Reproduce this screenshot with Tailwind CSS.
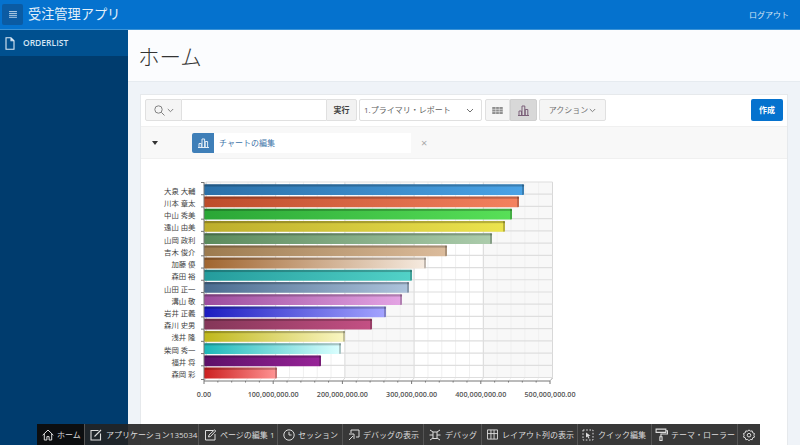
<!DOCTYPE html>
<html lang="ja">
<head>
    <meta charset="UTF-8">
    <title>受注管理アプリ</title>
    <script src="https://cdn.jsdelivr.net/npm/@tailwindcss/browser@4"></script>
</head>
<body class="relative w-[800px] h-[445px] overflow-hidden bg-[#eff3f8] font-['Open_Sans','Noto_Sans_CJK_JP',sans-serif] text-[#404040]">

    <!-- Header -->
    <header class="h-[30px] bg-[#0572ce] border-b border-[#3c93d6] flex items-center justify-between pl-[2px] pr-[11px] text-white">
        <div class="flex items-center">
            <button class="w-[21px] h-[21px] bg-[#0b5ba3] rounded-[2px] flex items-center justify-center">
                <svg width="8" height="7" viewBox="0 0 9 8" fill="#a9c7e2"><rect width="9" height="1.2"/><rect y="2.2" width="9" height="1.2"/><rect y="4.4" width="9" height="1.2"/><rect y="6.6" width="9" height="1.2"/></svg>
            </button>
            <span class="ml-[5px] text-[13.2px] leading-none text-[#e4f0fa]">受注管理アプリ</span>
        </div>
        <span class="text-[8px] text-[#d5e6f5]">ログアウト</span>
    </header>

    <div class="flex h-[415px]">
        <!-- Sidebar -->
        <nav class="w-[128px] shrink-0 bg-[#003c6e]">
            <div class="h-[26px] bg-[#00508f] flex items-center pl-[5px] text-[#d5e6f5]">
                <svg width="10" height="13" viewBox="0 0 10 13" fill="none" stroke="#dbe9f5" stroke-width="1.1"><path d="M1 .8h5l3 3v8.4H1zM6 .8v3h3"/></svg>
                <span class="ml-[8px] text-[8.5px] font-semibold">ORDERLIST</span>
            </div>
        </nav>

        <main class="flex-1 min-w-0">
            <!-- Title -->
            <div class="h-[52px] bg-[#fbfcfe] border-b border-[#e6ebf0] pl-[10px] pt-[2px] flex items-center">
                <h1 class="text-[21.5px] leading-none font-light text-[#333]">ホーム</h1>
            </div>

            <!-- Report card -->
            <section class="mt-[12px] ml-[12px] mr-[12px] h-[351px] bg-white border-t border-l border-r border-[#e6e9ec]">
                <div class="h-[31px] px-[4px] pt-[4px] flex items-start">
                    <div class="w-[37px] h-[22px] bg-[#f5f5f5] border border-[#e0e0e0] rounded-l-[2px] flex items-center justify-center gap-[2px]">
                        <svg width="11" height="11" viewBox="0 0 11 11" fill="none" stroke="#808080" stroke-width="1"><circle cx="4.5" cy="4.5" r="3.7"/><path d="M7.3 7.3l3.2 3.2"/></svg>
                        <svg width="7" height="5" viewBox="0 0 7 5" fill="none" stroke="#808080"><path d="M.8 1l2.7 2.7L6.2 1"/></svg>
                    </div>
                    <div class="w-[144px] h-[22px] bg-white border-y border-[#e0e0e0]"></div>
                    <div class="w-[31px] h-[22px] bg-[#f2f2f2] border border-[#e0e0e0] rounded-r-[2px] text-[8px] font-semibold flex items-center justify-center">実行</div>
                    <div class="ml-[2px] w-[123px] h-[22px] bg-white border border-[#e0e0e0] rounded-[2px] text-[8px] text-[#606060] flex items-center justify-between pl-[4px] pr-[7px]">
                        <span>1.プライマリ・レポート</span>
                        <svg width="8" height="5" viewBox="0 0 8 5" fill="none" stroke="#707070"><path d="M1 1l3 3 3-3"/></svg>
                    </div>
                    <div class="ml-[3px] w-[25px] h-[22px] bg-[#f5f5f5] border border-[#e0e0e0] rounded-l-[2px] flex items-center justify-center">
                        <svg width="11" height="7" viewBox="0 0 12 8" fill="#8d8d8d"><path d="M0 0h12v8H0z"/><path d="M4 0v8M8 0v8M0 2.7h12M0 5.3h12" stroke="#f5f5f5" stroke-width=".6"/></svg>
                    </div>
                    <div class="w-[27px] h-[22px] bg-[#d8d8d8] border border-[#cfcfcf] rounded-r-[2px] flex items-center justify-center">
                        <svg width="11" height="11" viewBox="0 0 11 11" fill="none" stroke="#7a5f78"><path d="M0 10.5h11M1 10V6h2.5v4M4 10V1h2.8v9M7.2 10V4.5h2.6V10"/></svg>
                    </div>
                    <div class="ml-[2px] w-[67px] h-[22px] bg-[#f5f5f5] border border-[#e0e0e0] rounded-[2px] text-[8px] text-[#707070] flex items-center justify-center gap-[1px]">
                        <span>アクション</span>
                        <svg width="7" height="5" viewBox="0 0 7 5" fill="none" stroke="#808080"><path d="M.8 1l2.7 2.7L6.2 1"/></svg>
                    </div>
                    <button class="ml-auto w-[32px] h-[22px] bg-[#0572ce] rounded-[2px] text-white text-[8px] font-bold">作成</button>
                </div>

                <div class="h-[33px] bg-[#f8f8f8] border-y border-[#f0f0f0] flex items-center relative">
                    <span class="ml-[11px] w-0 h-0 border-x-[3px] border-x-transparent border-t-[4px] border-t-[#333]"></span>
                    <div class="ml-[34px] w-[219px] h-[20px] bg-white flex items-center">
                        <span class="w-[22px] h-[20px] bg-[#3f7fb8] rounded-l-[2px] flex items-center justify-center">
                            <svg width="11" height="10" viewBox="0 0 11 10" fill="none" stroke="#e3edf6"><path d="M0 9.5h11M1 9V5.5h2.3V9M4 9V1h2.6v8M7.2 9V3.5h2.4V9"/></svg>
                        </span>
                        <span class="ml-[5px] text-[8px] text-[#3d73a8]">チャートの編集</span>
                    </div>
                    <span class="ml-[10px] text-[11px] leading-none text-[#a8a8a8]">×</span>
                </div>

                <div id="chart"></div>
            </section>
        </main>
    </div>

    <!-- Developer toolbar -->
    <div class="absolute left-[37px] bottom-0 h-[21px] w-[723px] bg-[#222222]/90 flex text-[8px] text-[#dcdcdc] divide-x divide-[#555]">
        <div class="w-[48px] bg-black/60 flex items-center pl-[5px] gap-[3px]">
            <svg width="12" height="12" viewBox="0 0 12 12" fill="none" stroke="#ddd"><path d="M.7 6.2L6 1l5.3 5.2M2.3 5v6h2.6V7.6h2.2V11h2.6V5"/></svg>
            <span>ホーム</span>
        </div>
        <div class="w-[114px] flex items-center pl-[5px] gap-[4px]">
            <svg width="12" height="12" viewBox="0 0 12 12" fill="none" stroke="#ddd" stroke-width="1.1"><path d="M8.5 1.5H1v9.5h9.5V4.5M4.5 7.5L11 1"/></svg>
            <span class="whitespace-nowrap">アプリケーション135034</span>
        </div>
        <div class="w-[79px] flex items-center pl-[5px] gap-[3px]">
            <svg width="13" height="12" viewBox="0 0 12 12" fill="none" stroke="#ddd"><path d="M8.5 1.5H1v9.5h9.5V5M4 8l.5-2L10 .8l1.2 1.2L6 7.5z"/></svg>
            <span class="whitespace-nowrap">ページの編集 1</span>
        </div>
        <div class="w-[65px] flex items-center pl-[5px] gap-[3px]">
            <svg width="12" height="12" viewBox="0 0 12 12" fill="none" stroke="#ddd"><circle cx="6" cy="6" r="5.2"/><path d="M6 2.8V6h2.6"/></svg>
            <span class="whitespace-nowrap">セッション</span>
        </div>
        <div class="w-[81px] flex items-center pl-[5px] gap-[3px]">
            <svg width="12" height="12" viewBox="0 0 12 12" fill="none" stroke="#ddd"><path d="M3 4V1h8v7H8M1 11l4-4M1 5h5v5"/></svg>
            <span class="whitespace-nowrap">デバッグの表示</span>
        </div>
        <div class="w-[58px] flex items-center pl-[5px] gap-[4px]">
            <svg width="12" height="12" viewBox="0 0 12 12" fill="none" stroke="#ddd"><path d="M4 3h4v6.5H4zM1 1l3 2M11 1L8 3M.5 6H4M8 6h3.5M1 11l3-2M11 11L8 9"/></svg>
            <span class="whitespace-nowrap">デバッグ</span>
        </div>
        <div class="w-[96px] flex items-center pl-[5px] gap-[4px]">
            <svg width="11" height="11" viewBox="0 0 12 12" fill="none" stroke="#ddd"><path d="M.5 1h11v10H.5zM.5 5h11M4.3 1v10M7.7 1v10"/></svg>
            <span class="whitespace-nowrap">レイアウト列の表示</span>
        </div>
        <div class="w-[74px] flex items-center pl-[4px] gap-[4px]">
            <svg width="12" height="12" viewBox="0 0 12 12" fill="none" stroke="#ddd" stroke-dasharray="1.6 1.6"><path d="M1 1h10v10H1z"/><path d="M4 3.5l4.5 3.2-2 .3 1 2.2-1 .4-1-2.2-1.5 1.2z" fill="#ddd" stroke="none"/></svg>
            <span class="whitespace-nowrap">クイック編集</span>
        </div>
        <div class="w-[86px] flex items-center pl-[3px] gap-[3px]">
            <svg width="13" height="13" viewBox="0 0 12 12" fill="none" stroke="#ddd"><path d="M1 1h9v3H1zM10 2.5h1.5v3H5.5V8M4.5 8h2v3.5h-2z"/></svg>
            <span class="whitespace-nowrap">テーマ・ローラー</span>
        </div>
        <div class="flex-1 flex items-center justify-center">
            <svg width="12" height="12" viewBox="0 0 12 12" fill="none" stroke="#ddd"><path d="M6 .8l1.3 1.4 1.9-.3.5 1.9 1.8.7-.6 1.8.6 1.8-1.8.7-.5 1.9-1.9-.3L6 11.8l-1.3-1.4-1.9.3-.5-1.9-1.8-.7.6-1.8-.6-1.8 1.8-.7.5-1.9 1.9.3z"/><circle cx="6" cy="6.2" r="1.8"/></svg>
        </div>
    </div>

    <script>
        // end = right edge of the bar in page px, colours = dark / light ends of the gradient
        var rows = [
            ['大泉 大輔', 524, '#2b70a8', '#4aa3e6'],
            ['川本 章太', 519, '#bd4c2a', '#f4825f'],
            ['中山 秀美', 512, '#2aa636', '#58e058'],
            ['遠山 由美', 505, '#bdae2c', '#ece44e'],
            ['山岡 政利', 492, '#5a8a5c', '#acccac'],
            ['吉木 俊介', 447, '#9c7a4e', '#dcbc9c'],
            ['加藤 優', 426, '#a0652f', '#f6ebe0'],
            ['森田 裕', 412, '#249c9c', '#52d2c8'],
            ['山田 正一', 409, '#4a6c90', '#aec4dc'],
            ['溝山 敬', 402, '#9c4c9c', '#e4a4e4'],
            ['岩井 正義', 386, '#1c1cc0', '#a4a4ff'],
            ['森川 史男', 372, '#843658', '#c45084'],
            ['浅井 隆', 345, '#c0b81c', '#faf6c4'],
            ['柴岡 秀一', 341, '#1cb8b8', '#dcffff'],
            ['福井 将', 321, '#5c1068', '#982498'],
            ['森岡 彩', 277, '#cc2020', '#ff9494']
        ];
        // chart div sits at page (141, 159), the group below is drawn in page px
        var step = 12.22, top0 = 182;
        var s = '<svg width="646" height="265" class="block" font-family="Open Sans, Noto Sans CJK JP, sans-serif">';
        s += '<g transform="translate(-141,-159)">';

        // back wall bands
        [[206, '#f8f8f8'], [275.5, '#ffffff'], [345, '#f8f8f8'], [414, '#ffffff'], [483, '#f8f8f8']].forEach(function (b) {
            s += '<rect x="' + b[0] + '" y="182" width="69.5" height="196" fill="' + b[1] + '"/>';
        });
        for (var m = 0; m <= 25; m++) {
            var x = 206.5 + m * 13.84;
            var major = m % 5 == 0;
            s += '<path d="M' + x + ' 182V378L' + (x - 2.5) + ' 381" fill="none" stroke="' + (major ? '#d8d8d8' : '#f0f0f0') + '" stroke-width="1"/>';
        }
        for (var i = 0; i <= 16; i++) {
            var y = top0 + i * step;
            s += '<path d="M204 ' + (y + 2.5) + 'L206.5 ' + y + 'H552.5" fill="none" stroke="#dedede" stroke-width="1.2"/>';
        }
        s += '<path d="M552.5 378L550 381" stroke="#bbb" fill="none"/>';

        // bars
        rows.forEach(function (r, i) {
            var y = 184.3 + i * step, end = r[1];
            s += '<defs><linearGradient id="g' + i + '"><stop offset="0" stop-color="' + r[2] + '"/><stop offset="1" stop-color="' + r[3] + '"/></linearGradient></defs>';
            s += '<rect x="204" y="' + y + '" width="' + (end - 204) + '" height="10.8" rx="1" fill="url(#g' + i + ')"/>';
            s += '<rect x="204" y="' + y + '" width="' + (end - 204) + '" height="2.2" fill="#000" fill-opacity=".22"/>';
            s += '<rect x="' + (end - 2) + '" y="' + y + '" width="2" height="10.8" rx=".8" fill="#000" fill-opacity=".22"/>';
            s += '<text x="195.5" y="' + (y + 9.5) + '" font-size="7.4" text-anchor="end" fill="#444">' + r[0] + '</text>';
            s += '<path d="M201 ' + (y - 1.8) + 'H204" stroke="#777"/>';
        });
        s += '<path d="M201 379.5H204" stroke="#777"/>';

        // axes
        s += '<path d="M204 182V381H550" fill="none" stroke="#777" stroke-width="1"/>';
        for (var t = 0; t <= 25; t++) {
            var tx = 204 + t * 13.84;
            s += '<path d="M' + tx + ' 381v' + (t % 5 == 0 ? 3 : 1.5) + '" stroke="#777"/>';
        }
        ['0.00', '100,000,000.00', '200,000,000.00', '300,000,000.00', '400,000,000.00', '500,000,000.00'].forEach(function (l, i) {
            s += '<text x="' + (204 + i * 69.2) + '" y="397" font-size="7.2" font-weight="600" text-anchor="middle" fill="#555">' + l + '</text>';
        });
        s += '</g></svg>';
        document.getElementById('chart').innerHTML = s;
    </script>
</body>
</html>
